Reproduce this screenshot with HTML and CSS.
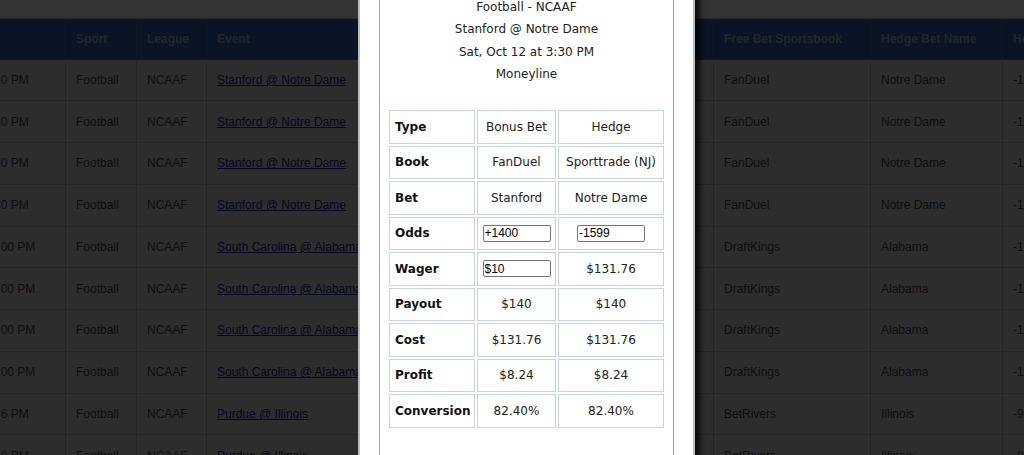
FILE: index.html
```html
<!DOCTYPE html>
<html lang="en">
<head>
<meta charset="utf-8">
<title>Bonus Bet Conversions</title>
<link rel="stylesheet" href="styles.css">
</head>
<body>
<div class="page-top"></div>
<div class="grid-wrap">
  <table class="grid">
    <colgroup>
      <col class="c-time"><col class="c-sport"><col class="c-league"><col class="c-event"><col class="c-fbn"><col class="c-fbo"><col class="c-fbs"><col class="c-hbn"><col class="c-hbo">
    </colgroup>
    <thead>
      <tr><th></th><th>Sport</th><th>League</th><th>Event</th><th>Free Bet Name</th><th>Free Bet Odds</th><th>Free Bet Sportsbook</th><th>Hedge Bet Name</th><th>Hedge Bet Odds</th></tr>
    </thead>
    <tbody>
      <tr><td>3:30 PM</td><td>Football</td><td>NCAAF</td><td><a href="#">Stanford @ Notre Dame</a></td><td>Stanford</td><td>+1400</td><td>FanDuel</td><td>Notre Dame</td><td>-1599</td></tr>
      <tr><td>3:30 PM</td><td>Football</td><td>NCAAF</td><td><a href="#">Stanford @ Notre Dame</a></td><td>Stanford</td><td>+1400</td><td>FanDuel</td><td>Notre Dame</td><td>-1599</td></tr>
      <tr><td>3:30 PM</td><td>Football</td><td>NCAAF</td><td><a href="#">Stanford @ Notre Dame</a></td><td>Stanford</td><td>+1400</td><td>FanDuel</td><td>Notre Dame</td><td>-1599</td></tr>
      <tr><td>3:30 PM</td><td>Football</td><td>NCAAF</td><td><a href="#">Stanford @ Notre Dame</a></td><td>Stanford</td><td>+1400</td><td>FanDuel</td><td>Notre Dame</td><td>-1599</td></tr>
      <tr><td>12:00 PM</td><td>Football</td><td>NCAAF</td><td><a href="#">South Carolina @ Alabama</a></td><td>South Carolina</td><td>+1100</td><td>DraftKings</td><td>Alabama</td><td>-1250</td></tr>
      <tr><td>12:00 PM</td><td>Football</td><td>NCAAF</td><td><a href="#">South Carolina @ Alabama</a></td><td>South Carolina</td><td>+1100</td><td>DraftKings</td><td>Alabama</td><td>-1250</td></tr>
      <tr><td>12:00 PM</td><td>Football</td><td>NCAAF</td><td><a href="#">South Carolina @ Alabama</a></td><td>South Carolina</td><td>+1100</td><td>DraftKings</td><td>Alabama</td><td>-1250</td></tr>
      <tr><td>12:00 PM</td><td>Football</td><td>NCAAF</td><td><a href="#">South Carolina @ Alabama</a></td><td>South Carolina</td><td>+1100</td><td>DraftKings</td><td>Alabama</td><td>-1250</td></tr>
      <tr><td>3:36 PM</td><td>Football</td><td>NCAAF</td><td><a href="#">Purdue @ Illinois</a></td><td>Purdue</td><td>+700</td><td>BetRivers</td><td>Illinois</td><td>-910</td></tr>
      <tr><td>3:30 PM</td><td>Football</td><td>NCAAF</td><td><a href="#">Purdue @ Illinois</a></td><td>Purdue</td><td>+700</td><td>BetRivers</td><td>Illinois</td><td>-910</td></tr>
    </tbody>
  </table>
</div>

<div class="overlay"></div>

<div class="modal">
  <div class="modal-inner">
    <div class="bet-info">
      <div>Football - NCAAF</div>
      <div>Stanford @ Notre Dame</div>
      <div>Sat, Oct 12 at 3:30 PM</div>
      <div>Moneyline</div>
    </div>
    <table class="calc">
      <colgroup><col class="k-label"><col class="k-bonus"><col class="k-hedge"></colgroup>
      <tbody>
        <tr><th>Type</th><td>Bonus Bet</td><td>Hedge</td></tr>
        <tr><th>Book</th><td>FanDuel</td><td>Sporttrade (NJ)</td></tr>
        <tr><th>Bet</th><td>Stanford</td><td>Notre Dame</td></tr>
        <tr><th>Odds</th><td><input class="field" type="text" value="+1400"></td><td><input class="field" type="text" value="-1599"></td></tr>
        <tr><th>Wager</th><td><input class="field" type="text" value="$10"></td><td>$131.76</td></tr>
        <tr><th>Payout</th><td>$140</td><td>$140</td></tr>
        <tr><th>Cost</th><td>$131.76</td><td>$131.76</td></tr>
        <tr><th>Profit</th><td>$8.24</td><td>$8.24</td></tr>
        <tr><th>Conversion</th><td>82.40%</td><td>82.40%</td></tr>
      </tbody>
    </table>
  </div>
</div>
</body>
</html>
```

FILE: styles.css
```css
* { box-sizing: border-box; }

html, body {
  margin: 0;
  padding: 0;
}

body {
  width: 1024px;
  height: 455px;
  overflow: hidden;
  position: relative;
  background: #ffffff;
  font-family: "Liberation Sans", Arial, sans-serif;
  font-size: 12px;
}

.page-top {
  height: 19px;
  border-bottom: 1px solid #c4c4c4;
}

.grid-wrap {
  overflow: hidden;
  width: 1024px;
}

.grid {
  border-collapse: collapse;
  table-layout: fixed;
  width: 1149px;
  margin-left: -27px;
}

.c-time { width: 92px; }
.c-sport { width: 71px; }
.c-league { width: 70px; }
.c-event { width: 214px; }
.c-fbn { width: 140px; }
.c-fbo { width: 153px; }
.c-fbs { width: 157px; }
.c-hbn { width: 132px; }
.c-hbo { width: 120px; }

.grid thead tr { height: 40px; }
.grid tbody tr { height: 41.75px; }

.grid th {
  background: #3266b4;
  color: #a8b8d4;
  font-weight: bold;
  text-align: left;
  padding: 0 10px;
  border: 1px solid #5576aa;
  border-top: none;
  white-space: nowrap;
  overflow: hidden;
}

.grid td {
  background: #e0e0e0;
  color: #4a4a4a;
  padding: 0 10px;
  border: 1px solid #b8b8b8;
  white-space: nowrap;
  overflow: hidden;
}

.grid a {
  color: #1a1aa8;
  text-decoration: underline;
}

.overlay {
  position: absolute;
  inset: 0;
  background: rgba(0, 0, 0, 0.8);
}

.modal {
  position: absolute;
  top: -20px;
  left: 358px;
  width: 337px;
  height: 520px;
  background: #ffffff;
  border: 2px solid #bdbdbd;
  box-shadow: 5px 0 5px rgba(0, 0, 0, 0.75);
  padding: 0 19px;
}

.modal-inner {
  height: 100%;
  border-left: 1px solid #a8a8a8;
  border-right: 1px solid #9a9a9a;
  padding-top: 14px;
  font-family: "DejaVu Sans", Verdana, sans-serif;
  font-size: 12px;
  color: #222222;
}

.bet-info {
  text-align: center;
  line-height: 22.4px;
}

.calc {
  margin: 22.4px auto 0;
  width: 279px;
  table-layout: fixed;
  border-collapse: separate;
  border-spacing: 2px;
}

.k-label { width: 86px; }
.k-bonus { width: 79px; }
.k-hedge { width: 106px; }

.calc th,
.calc td {
  height: 33.5px;
  padding: 0 4px;
  border: 1px solid #c2d4f0;
  white-space: nowrap;
}

.calc th {
  text-align: left;
  font-weight: bold;
  color: #111111;
  padding-left: 5px;
}

.calc td {
  text-align: center;
}

.field {
  display: block;
  margin: 0 auto;
  width: 68px;
  height: 17px;
  padding: 0 1px;
  border: 1px solid #767676;
  border-radius: 2px;
  font-family: "Liberation Sans", Arial, sans-serif;
  font-size: 12px;
  color: #000000;
  background: #ffffff;
}
```
